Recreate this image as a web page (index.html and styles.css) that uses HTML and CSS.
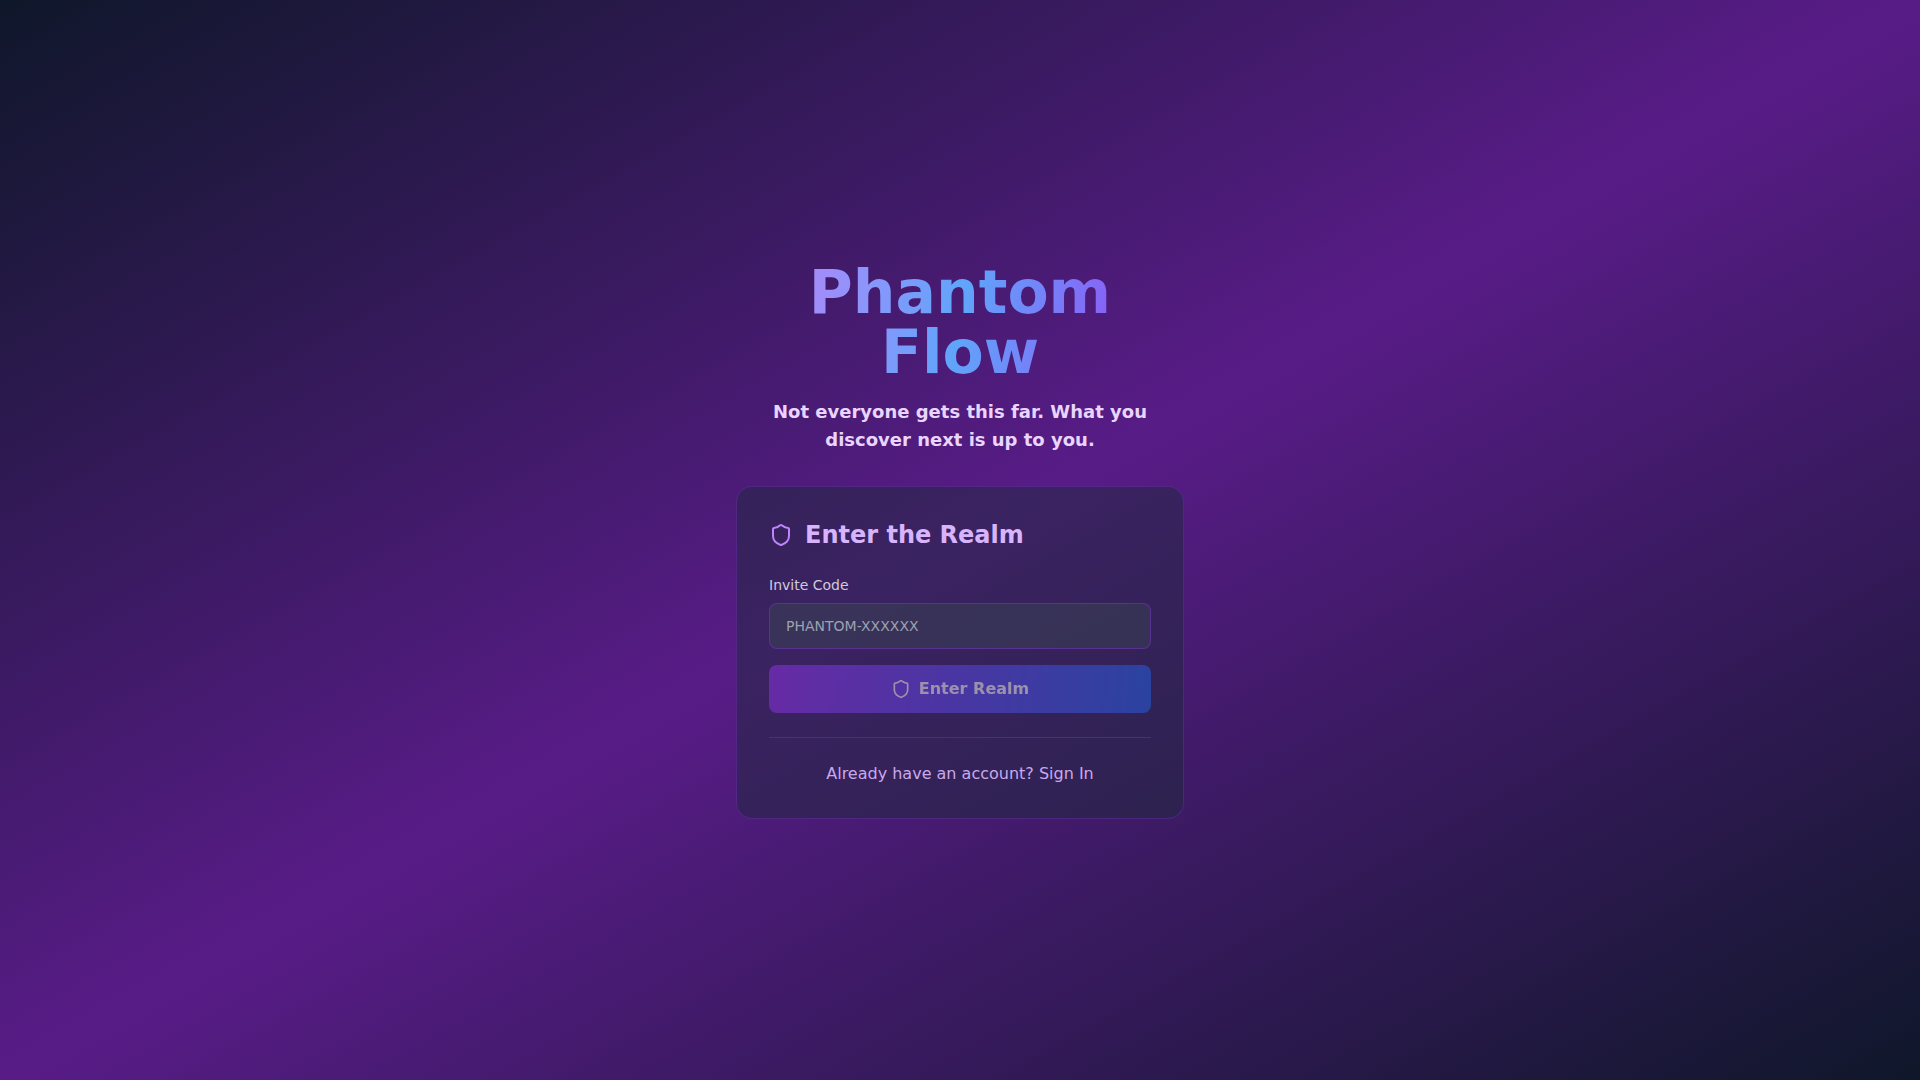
FILE: index.html
```html
<!DOCTYPE html>
<html lang="en">
<head>
  <meta charset="UTF-8">
  <meta name="viewport" content="width=device-width, initial-scale=1.0">
  <title>Phantom Flow</title>
  <link rel="stylesheet" href="styles.css">
</head>
<body>
  <main class="wrap">
    <header class="brand">
      <h1>Phantom Flow</h1>
      <p>Not everyone gets this far. What you discover next is up to you.</p>
    </header>

    <section class="card">
      <h2>
        <svg class="icon icon-lg" viewBox="0 0 24 24"><path d="M20 13c0 5-3.5 7.5-7.66 8.95a1 1 0 0 1-.67-.01C7.5 20.5 4 18 4 13V6a1 1 0 0 1 1-1c2 0 4.5-1.2 6.24-2.72a1.17 1.17 0 0 1 1.52 0C14.51 3.81 17 5 19 5a1 1 0 0 1 1 1z"/></svg>
        Enter the Realm
      </h2>

      <form>
        <label for="invite">Invite Code</label>
        <input id="invite" type="text" placeholder="PHANTOM-XXXXXX">
        <button type="button" disabled>
          <svg class="icon" viewBox="0 0 24 24"><path d="M20 13c0 5-3.5 7.5-7.66 8.95a1 1 0 0 1-.67-.01C7.5 20.5 4 18 4 13V6a1 1 0 0 1 1-1c2 0 4.5-1.2 6.24-2.72a1.17 1.17 0 0 1 1.52 0C14.51 3.81 17 5 19 5a1 1 0 0 1 1 1z"/></svg>
          Enter Realm
        </button>
      </form>

      <div class="signin">
        <a href="#">Already have an account? Sign In</a>
      </div>
    </section>
  </main>
</body>
</html>
```

FILE: styles.css
```css
* {
  box-sizing: border-box;
}
body {
  margin: 0;
  min-height: 100vh;
  display: flex;
  align-items: center;
  justify-content: center;
  font-family: "DejaVu Sans", sans-serif;
  background: linear-gradient(to bottom right, #0f172a 0%, #581c87 50%, #0f172a 100%);
}
.wrap {
  width: 448px;
}
.brand {
  text-align: center;
  margin-bottom: 32px;
}
h1 {
  width: 304px;
  margin: 0 auto 16px;
  font-size: 60px;
  line-height: 60px;
  font-weight: 700;
  background: linear-gradient(100deg, #a78bfa 0%, #60a5fa 50%, #8b5cf6 100%);
  -webkit-background-clip: text;
  background-clip: text;
  color: transparent;
}
.brand p {
  margin: 0;
  font-size: 18px;
  line-height: 28px;
  font-weight: 600;
  color: #e9d5ff;
}
.card {
  padding: 32px;
  background: rgba(30, 41, 59, 0.5);
  border: 1px solid rgba(147, 51, 234, 0.3);
  border-radius: 16px;
}
h2 {
  display: flex;
  align-items: center;
  gap: 12px;
  margin: 0 0 24px;
  font-size: 24px;
  line-height: 32px;
  font-weight: 700;
  color: #d8b4fe;
}
.icon {
  width: 20px;
  height: 20px;
  fill: none;
  stroke: currentColor;
  stroke-width: 2;
  stroke-linecap: round;
  stroke-linejoin: round;
  flex-shrink: 0;
}
.icon-lg {
  width: 24px;
  height: 24px;
  stroke: #c084fc;
}
label {
  display: block;
  margin-bottom: 8px;
  font-size: 14px;
  line-height: 20px;
  color: #d1c9dc;
}
input {
  display: block;
  width: 100%;
  height: 46px;
  padding: 0 16px;
  font-family: inherit;
  font-size: 14px;
  color: #fff;
  background: rgba(55, 65, 81, 0.5);
  border: 1px solid rgba(147, 51, 234, 0.4);
  border-radius: 8px;
}
input::placeholder {
  color: #9ca3af;
}
button {
  display: flex;
  align-items: center;
  justify-content: center;
  gap: 8px;
  width: 100%;
  height: 48px;
  margin-top: 16px;
  font-family: inherit;
  font-size: 16px;
  font-weight: 700;
  color: #fff;
  background: linear-gradient(90deg, #9333ea, #2563eb);
  border: 0;
  border-radius: 8px;
  opacity: 0.5;
}
.signin {
  margin-top: 24px;
  padding-top: 24px;
  border-top: 1px solid #374151;
  text-align: center;
  font-size: 16px;
  line-height: 24px;
}
.signin a {
  color: #c9a8ec;
  text-decoration: none;
}
```
